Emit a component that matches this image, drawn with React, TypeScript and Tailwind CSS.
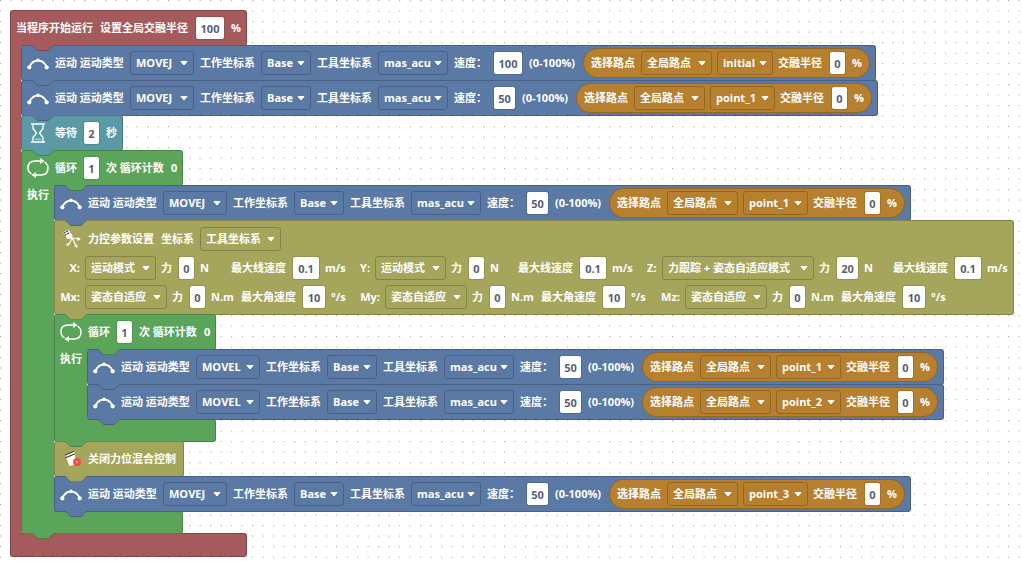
import type { ReactNode } from "react";
import clsx from "clsx";

const RED = { bg: "bg-[#a55b5b]", fill: "fill-[#a55b5b]" };
const BLUE = { bg: "bg-[#5b79a5]", fill: "fill-[#5b79a5]" };
const TEAL = { bg: "bg-[#5b99a5]", fill: "fill-[#5b99a5]" };
const GREEN = { bg: "bg-[#5ba55b]", fill: "fill-[#5ba55b]" };
const OLIVE = { bg: "bg-[#a5a55b]", fill: "fill-[#a5a55b]" };

type Tone = typeof RED;

function Tab({ tone, className }: { tone: Tone; className: string }) {
  return (
    <svg width="22" height="7" viewBox="0 0 22 7" className={clsx("pointer-events-none absolute z-10", className)} aria-hidden="true">
      <path d="M0 0H22L16 6H6Z" className={tone.fill} />
      <path d="M0 .5L5.500 5.500H16.500L21.500 .5" className="fill-none stroke-black/20" />
    </svg>
  );
}

function MotionIcon() {
  return (
    <svg width="22" height="20" viewBox="0 0 22 20" fill="none" stroke="white" aria-hidden="true">
      <path d="M2.500 13.500C4.500 9.800 7.300 7.500 11 7.500S17.500 9.800 19.500 13.500" strokeWidth="1.800" />
      <circle cx="2.300" cy="14.300" r="2.100" fill="white" stroke="none" />
      <circle cx="19.700" cy="14.300" r="2.100" fill="white" stroke="none" />
      <circle cx="11" cy="7.300" r="1.700" fill="white" stroke="none" />
    </svg>
  );
}

function HourglassIcon() {
  return (
    <svg width="22" height="22" viewBox="0 0 22 22" fill="none" stroke="white" strokeWidth="1.300" aria-hidden="true">
      <path d="M4 2H18M4 20H18" strokeWidth="1.600" />
      <path d="M6 2V6.500L9.500 11L6 15.500V20M16 2V6.500L12.500 11L16 15.500V20" strokeLinejoin="round" />
      <path d="M8 17.300H14" stroke="#7fe3f5" strokeWidth="1.600" />
    </svg>
  );
}

function LoopIcon() {
  return (
    <svg width="22" height="22" viewBox="0 0 22 22" fill="none" stroke="white" strokeWidth="1.500" aria-hidden="true">
      <path d="M4.500 16.800C2 15.500 1 13.500 1 11C1 6.500 3.500 4 8 4H15M17.500 5.200C20 6.500 21 8.500 21 11C21 15.500 18.500 18 14 18H7" />
      <path d="M13 1L17.500 4.100L13 7ZM9 15L4.500 17.900L9 21Z" fill="white" stroke="none" />
    </svg>
  );
}

function ForceIcon() {
  return (
    <svg width="22" height="22" viewBox="0 0 22 22" fill="none" aria-hidden="true">
      <path d="M3 4.500L9 1.200L12.500 7.800L12.300 10.500L7.500 11Z" fill="white" />
      <path d="M3.700 5.200L9.300 2.200M4.800 7.300L10.300 4.300" stroke="#33332a" strokeWidth="1.100" strokeDasharray="2 .8" />
      <path d="M12.300 10L18 11M12.300 10L9 16M12.300 10L15.800 17.500" stroke="white" strokeWidth="1.200" />
      <path d="M17.500 8.800L20.800 11.300L17.200 13ZM6.800 14.700L10 16.800L6.700 18.300ZM13.800 17.800L17.300 16.200L17.300 20Z" fill="white" />
    </svg>
  );
}

function ForceOffIcon() {
  return (
    <svg width="22" height="22" viewBox="0 0 22 22" fill="none" aria-hidden="true">
      <path d="M5 6.800L14 2.800L15.500 10.500L14 17L9.500 18Z" fill="white" />
      <path d="M5 7.300L14 3.300M5.500 9.700L14.500 6" stroke="#33332a" strokeWidth="1.200" />
      <circle cx="17" cy="14" r="3.900" fill="#f5474c" />
      <path d="M15.700 12.700L18.300 15.300M18.300 12.700L15.700 15.300" stroke="#ffc4c4" strokeWidth=".8" />
    </svg>
  );
}

function Text({ children, w }: { children: ReactNode; w?: string }) {
  return <span className={clsx("shrink-0 whitespace-pre", w)}>{children}</span>;
}

function Pick({ name, value, others = [], w }: { name: string; value: string; others?: string[]; w: string }) {
  return (
    <span className={clsx("relative flex h-6 shrink-0", w)}>
      <select
        aria-label={name}
        defaultValue={value}
        className="w-full appearance-none rounded-[3px] border border-black/20 bg-transparent pl-[5px] text-[11px] font-bold text-white outline-none"
      >
        {[value, ...others].map((o) => (
          <option key={o} className="text-black">{o}</option>
        ))}
      </select>
      <svg width="8" height="5" viewBox="0 0 8 5" className="pointer-events-none absolute top-[10px] right-1.5" aria-hidden="true">
        <path d="M1 .5H7L4 4Z" fill="white" stroke="white" strokeLinejoin="round" />
      </svg>
    </span>
  );
}

function Num({ name, value, w }: { name: string; value: string; w: string }) {
  return (
    <input
      aria-label={name}
      defaultValue={value}
      inputMode="decimal"
      className={clsx("h-6 shrink-0 rounded-[3px] border border-black/10 bg-white bg-clip-padding text-center text-[11px] font-bold text-[#575e75] outline-none", w)}
    />
  );
}

function Block({ tone, children }: { tone: Tone; children: ReactNode }) {
  return (
    <div className={clsx("relative flex h-9 w-max items-center gap-1.5 rounded-[3px] border border-black/20 px-[5px]", tone.bg)}>
      {children}
      <Tab tone={tone} className="top-full left-[10px]" />
    </div>
  );
}

function Container({ tone, head, rail, side, last = false, children }: {
  tone: Tone; head: ReactNode; rail: string; side?: string; last?: boolean; children: ReactNode;
}) {
  return (
    <section className="relative grid w-max grid-cols-[max-content_1fr]">
      <div className={clsx("col-start-1 flex h-9 items-center gap-1.5 rounded-t-[3px] rounded-br-[3px] border border-black/20 px-[5px]", tone.bg)}>
        {head}
      </div>
      <div className="relative z-[1] col-span-2 -mt-px flex">
        <div className={clsx("shrink-0 border-l border-black/20 pl-[5px] leading-5", tone.bg, rail)}>{side}</div>
        <div className="relative flex flex-col -space-y-px">
          {children}
        </div>
        <div className={clsx("absolute top-0 left-0 h-0", rail)}>
          <Tab tone={tone} className="top-0 left-full ml-[11px]" />
        </div>
      </div>
      <div className={clsx("relative col-start-1 -mt-px rounded-r-[3px] rounded-bl-[3px] border border-black/20", last ? "h-6" : "h-[23px]", tone.bg)}>
        {!last && <Tab tone={tone} className="top-full left-[10px]" />}
      </div>
      <div className={clsx("absolute bottom-[21px] left-0 z-[1] h-1 border-l border-black/20", tone.bg, rail)} />
    </section>
  );
}

function Move({ mode, speed, point }: { mode: string; speed: string; point: string }) {
  return (
    <Block tone={BLUE}>
      <MotionIcon />
      <Text w="w-[69px]">运动 运动类型</Text>
      <Pick name="运动类型" value={mode} others={[mode === "MOVEJ" ? "MOVEL" : "MOVEJ"]} w="w-16" />
      <Text w="w-[55px]">工作坐标系</Text>
      <Pick name="工作坐标系" value="Base" w="w-[50px]" />
      <Text w="w-[55px]">工具坐标系</Text>
      <Pick name="工具坐标系" value="mas_acu" w="w-[70px]" />
      <Text w="w-[33px]">速度：</Text>
      <Num name="速度" value={speed} w={speed === "100" ? "w-[30px]" : "w-[23px]"} />
      <Text w="w-12">(0-100%)</Text>
      <div className="flex h-[30px] items-center gap-[5px] rounded-full border border-black/20 bg-[#b7802f] pr-[7px] pl-[7px]">
        <Text w="w-[45px]">选择路点</Text>
        <Pick name="选择路点" value="全局路点" w="w-[71px]" />
        <Pick name="路点" value={point} w={point === "initial" ? "w-14" : "w-[65px]"} />
        <Text w="w-[46px]">交融半径</Text>
        <Num name="交融半径" value="0" w="w-[17px]" />
        <span className="w-[11px] text-right">%</span>
      </div>
    </Block>
  );
}

function Axis({ axis, lead, mode, modeW, force, forceW, unit, unitW, limit, max, maxW, rate, rateW }: {
  axis: string; lead: string; mode: string; modeW: string; force: string; forceW: string;
  unit: string; unitW: string; limit: string; max: string; maxW: string; rate: string; rateW: string;
}) {
  return (
    <div className="flex items-center gap-[5px]">
      <Text w={lead}>{axis}:</Text>
      <Pick name={`${axis} 模式`} value={mode} w={modeW} />
      <Text w="w-3">力</Text>
      <Num name={`${axis} 力`} value={force} w={forceW} />
      <Text w={unitW}>{unit}</Text>
      <Text w="w-14">{limit}</Text>
      <Num name={`${axis} ${limit}`} value={max} w={maxW} />
      <Text w={rateW}>{rate}</Text>
    </div>
  );
}

const LINEAR = { modeW: "w-[71px]", forceW: "w-[17px]", unit: "N", limit: "最大线速度", max: "0.1", maxW: "w-7", rate: "m/s" };
const ANGULAR = {
  lead: "w-5 text-right", mode: "姿态自适应", modeW: "w-[82px]", force: "0", forceW: "w-[17px]", unit: "N.m", unitW: "w-[25px]",
  limit: "最大角速度", max: "10", maxW: "w-6", rate: "°/s",
};

function ForceSettings() {
  return (
    <div className={clsx("relative flex w-max flex-col gap-[5px] rounded-[3px] border border-black/20 px-[5px] pt-1.5 pb-[5px]", OLIVE.bg)}>
      <div className="flex h-6 items-center gap-1.5">
        <ForceIcon />
        <Text w="w-[67px]">力控参数设置</Text>
        <Text w="w-[33px]">坐标系</Text>
        <Pick name="坐标系" value="工具坐标系" w="w-[81px]" />
      </div>
      <div className="flex">
        <Axis axis="X" lead="w-5 text-right" mode="运动模式" force="0" unitW="w-[26px]" rateW="w-[35px]" {...LINEAR} />
        <Axis axis="Y" lead="w-[10px]" mode="运动模式" force="0" unitW="w-[23px]" rateW="w-[35px]" {...LINEAR} />
        <Axis axis="Z" lead="w-[10px]" mode="力跟踪 + 姿态自适应模式" force="20" unitW="w-6" rateW="w-[21px]" {...LINEAR} modeW="w-[152px]" forceW="w-[23px]" />
      </div>
      <div className="flex">
        <Axis axis="Mx" rateW="w-[29px]" {...ANGULAR} />
        <Axis axis="My" rateW="w-[29px]" {...ANGULAR} />
        <Axis axis="Mz" rateW="w-[29px]" {...ANGULAR} />
      </div>
      <Tab tone={OLIVE} className="top-full left-[10px]" />
    </div>
  );
}

function Loop({ children }: { children: ReactNode }) {
  return (
    <Container
      tone={GREEN}
      rail="w-[33px]"
      side="执行"
      head={
        <>
          <LoopIcon />
          <Text w="w-[22px]">循环</Text>
          <Num name="循环次数" value="1" w="w-[17px]" />
          <Text w="w-[59px]">次 循环计数</Text>
          <Text w="w-[6px]">0</Text>
        </>
      }
    >
      {children}
    </Container>
  );
}

export default function App() {
  return (
    <main className="relative min-h-screen overflow-x-auto bg-white p-[10px] font-['Open_Sans','Noto_Sans_CJK_SC',sans-serif] text-[11px] leading-4 font-bold text-white">
      <svg className="absolute inset-0 size-full" aria-hidden="true">
        <defs>
          <pattern id="dots" width="10.5" height="10.5" patternUnits="userSpaceOnUse">
            <path d="M0 .5H1.300" stroke="#bbb" strokeWidth="1.200" />
          </pattern>
        </defs>
        <rect width="100%" height="100%" fill="url(#dots)" />
      </svg>
      <Container
        tone={RED}
        rail="w-[11px]"
        last
        head={
          <>
            <Text w="w-[78px]">当程序开始运行</Text>
            <Text w="w-[89px]">设置全局交融半径</Text>
            <Num name="设置全局交融半径" value="100" w="w-[30px]" />
            <Text w="w-[10px]">%</Text>
          </>
        }
      >
        <Move mode="MOVEJ" speed="100" point="initial" />
        <Move mode="MOVEJ" speed="50" point="point_1" />
        <Block tone={TEAL}>
          <HourglassIcon />
          <Text w="w-[22px]">等待</Text>
          <Num name="等待" value="2" w="w-[17px]" />
          <Text w="w-[11px]">秒</Text>
        </Block>
        <Loop>
          <Move mode="MOVEJ" speed="50" point="point_1" />
          <ForceSettings />
          <Loop>
            <Move mode="MOVEL" speed="50" point="point_1" />
            <Move mode="MOVEL" speed="50" point="point_2" />
          </Loop>
          <Block tone={OLIVE}>
            <ForceOffIcon />
            <Text w="w-[90px]">关闭力位混合控制</Text>
          </Block>
          <Move mode="MOVEJ" speed="50" point="point_3" />
        </Loop>
      </Container>
    </main>
  );
}
